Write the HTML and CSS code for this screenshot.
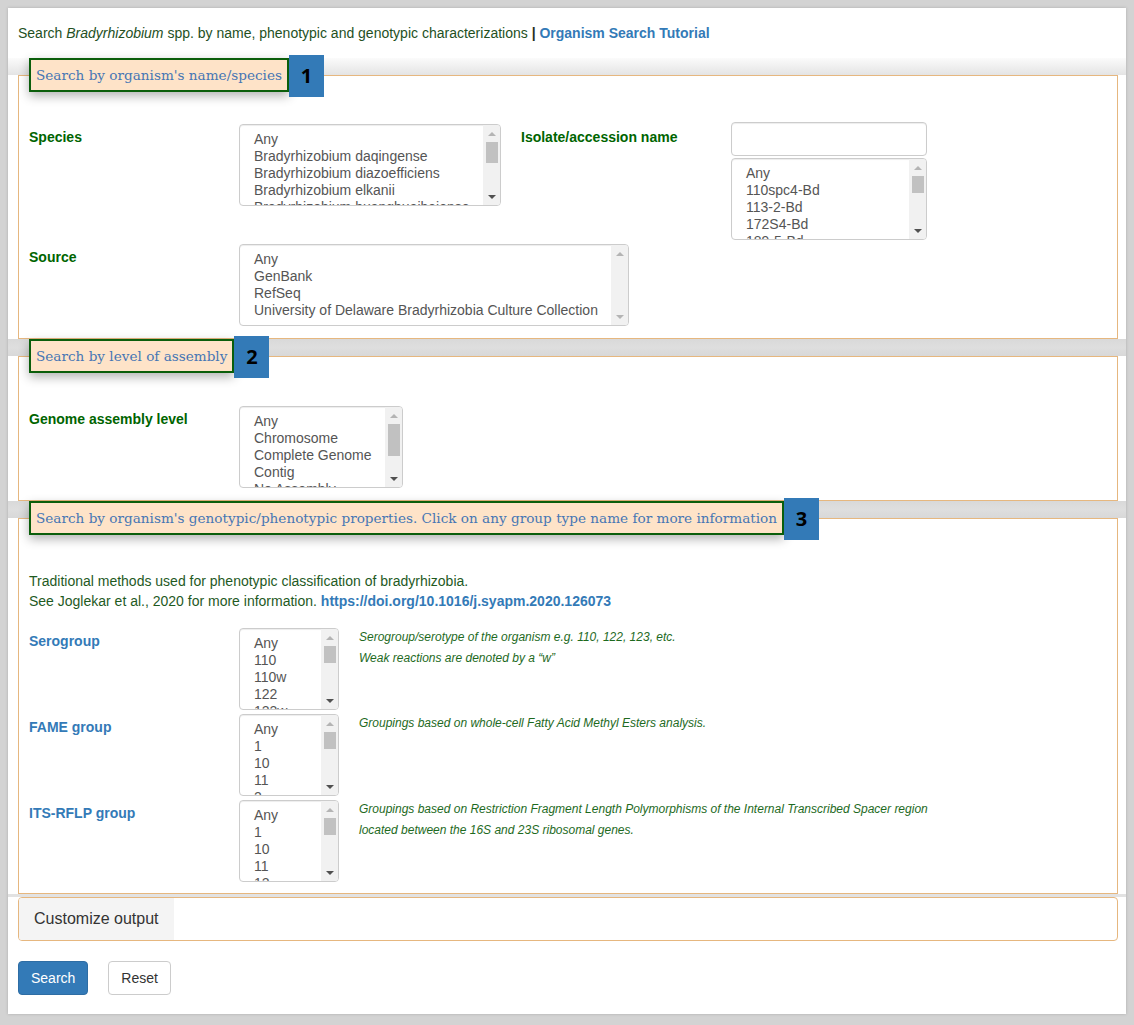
FILE: index.html
```html
<!DOCTYPE html>
<html>
<head>
<meta charset="utf-8">
<link rel="stylesheet" href="styles.css">
</head>
<body>
<div class="page">
  <p class="intro">Search <i>Bradyrhizobium</i> spp. by name, phenotypic and genotypic characterizations <b class="bar">|</b> <a class="link">Organism Search Tutorial</a></p>

  <div class="sec sec-first">
    <fieldset class="fs fs1">
      <legend class="lg">Search by organism's name/species<span class="badge">1</span></legend>
      <div class="row row-first">
        <div class="lab lab-green">Species</div>
        <div class="ctl ctl-species">
          <div class="ms w-species">
            <div class="opts"><div>Any</div><div>Bradyrhizobium daqingense</div><div>Bradyrhizobium diazoefficiens</div><div>Bradyrhizobium elkanii</div><div>Bradyrhizobium huanghuaihaiense</div></div>
            <div class="sb"><span class="up"></span><span class="thumb t-md"></span><span class="fill"></span><span class="dn"></span></div>
          </div>
        </div>
        <div class="lab lab-green">Isolate/accession name</div>
        <div class="ctl ctl-isolate">
          <div class="inp"></div>
          <div class="ms w-isolate">
            <div class="opts"><div>Any</div><div>110spc4-Bd</div><div>113-2-Bd</div><div>172S4-Bd</div><div>189-5-Bd</div></div>
            <div class="sb"><span class="up"></span><span class="thumb t-sm"></span><span class="fill"></span><span class="dn"></span></div>
          </div>
        </div>
      </div>
      <div class="row row-second">
        <div class="lab lab-green">Source</div>
        <div class="ctl">
          <div class="ms w-source">
            <div class="opts"><div>Any</div><div>GenBank</div><div>RefSeq</div><div>University of Delaware Bradyrhizobia Culture Collection</div></div>
            <div class="sb"><span class="up"></span><span class="fill"></span><span class="dn dn-off"></span></div>
          </div>
        </div>
      </div>
    </fieldset>
  </div>

  <div class="sec">
    <fieldset class="fs fs2">
      <legend class="lg">Search by level of assembly<span class="badge">2</span></legend>
      <div class="row">
        <div class="lab lab-green">Genome assembly level</div>
        <div class="ctl">
          <div class="ms w-genome">
            <div class="opts"><div>Any</div><div>Chromosome</div><div>Complete Genome</div><div>Contig</div><div>No Assembly</div></div>
            <div class="sb"><span class="up"></span><span class="thumb t-lg"></span><span class="fill"></span><span class="dn"></span></div>
          </div>
        </div>
      </div>
    </fieldset>
  </div>

  <div class="sec">
    <fieldset class="fs fs3">
      <legend class="lg">Search by organism's genotypic/phenotypic properties. Click on any group type name for more information<span class="badge">3</span></legend>
      <p class="trad">Traditional methods used for phenotypic classification of bradyrhizobia.<br>See Joglekar et al., 2020 for more information. <a class="link">https://doi.org/10.1016/j.syapm.2020.126073</a></p>
      <div class="grp">
        <div class="lab lab-blue">Serogroup</div>
        <div class="ms w-group">
          <div class="opts"><div>Any</div><div>110</div><div>110w</div><div>122</div><div>122w</div></div>
          <div class="sb"><span class="up"></span><span class="thumb t-sm"></span><span class="fill"></span><span class="dn"></span></div>
        </div>
        <div class="desc">Serogroup/serotype of the organism e.g. 110, 122, 123, etc.<br>Weak reactions are denoted by a “w”</div>
      </div>
      <div class="grp">
        <div class="lab lab-blue">FAME group</div>
        <div class="ms w-group">
          <div class="opts"><div>Any</div><div>1</div><div>10</div><div>11</div><div>2</div></div>
          <div class="sb"><span class="up"></span><span class="thumb t-sm"></span><span class="fill"></span><span class="dn"></span></div>
        </div>
        <div class="desc">Groupings based on whole-cell Fatty Acid Methyl Esters analysis.</div>
      </div>
      <div class="grp">
        <div class="lab lab-blue">ITS-RFLP group</div>
        <div class="ms w-group">
          <div class="opts"><div>Any</div><div>1</div><div>10</div><div>11</div><div>12</div></div>
          <div class="sb"><span class="up"></span><span class="thumb t-sm"></span><span class="fill"></span><span class="dn"></span></div>
        </div>
        <div class="desc">Groupings based on Restriction Fragment Length Polymorphisms of the Internal Transcribed Spacer region<br>located between the 16S and 23S ribosomal genes.</div>
      </div>
    </fieldset>
  </div>

  <div class="gap"></div>
  <div class="panel"><div class="panel-title">Customize output</div></div>

  <div class="btns">
    <button class="btn btn-primary">Search</button>
    <button class="btn btn-default">Reset</button>
  </div>
</div>
</body>
</html>
```
FILE: styles.css
```css
* { box-sizing: border-box; }
html, body { margin: 0; }
body {
  background: #d3d3d3;
  font-family: "Liberation Sans", Arial, sans-serif;
  font-size: 14px;
  line-height: 20px;
  color: #333;
  height: 1025px;
  padding: 8px 0 0 8px;
  overflow: hidden;
}
.page {
  width: 1118px;
  background: #fff;
  padding: 15px 8px 19px 10px;
  box-shadow: 0 0 3px rgba(0,0,0,.18);
}
.intro { margin: 0 0 15px; color: #24501e; }
.bar { color: #1f2f1f; }
.link { color: #337ab7; font-weight: bold; text-decoration: none; }

/* full-width section; the band above each fieldset's top border is the grey shadow strip */
.sec {
  margin: 0 -8px 0 -10px;
  padding: 0 8px 0 10px;
  background:
    linear-gradient(to bottom, #d9d9d9, #dedede 50%, #d8d8d8) 0 0 / 100% 17px no-repeat,
    #fff;
}
.sec-first {
  background:
    linear-gradient(to bottom, #fbfbfb, #e4e4e4) 0 0 / 100% 17px no-repeat,
    #fff;
}
.fs {
  margin: 0;
  padding: 0 10px 12px;
  border: 1px solid #e6b77f;
  background: transparent;
  min-width: 0;
}
.lg {
  position: relative;
  padding: 0 5px;
  height: 34px;
  line-height: 30px;
  border: 2px solid #0b5e0b;
  background: #fee3c8;
  color: #4676b4;
  font-family: "DejaVu Serif", "Liberation Serif", serif;
  font-size: 13.6px;
  box-shadow: 0 4px 10px rgba(0,0,0,.3);
}
.badge {
  position: absolute;
  left: calc(100% + 2px);
  top: -5px;
  width: 35px;
  height: 42px;
  background: #337ab7;
  color: #000;
  font-family: "Open Sans", "Liberation Sans", sans-serif;
  font-weight: bold;
  font-size: 20px;
  line-height: 42px;
  text-align: center;
}

.row { display: flex; align-items: flex-start; }
.fs1 .row-first { margin-top: 30px; }
.row-second { margin-top: 4px; }
.fs2 .row { margin-top: 33px; }
.lab { width: 210px; flex: none; padding-top: 3px; font-weight: bold; }
.row-first .lab { padding-top: 5px; }
.lab-green { color: #006400; }
.lab-blue { color: #337ab7; }
.ctl-species { width: 282px; flex: none; padding-top: 2px; }
.ctl-isolate { width: 196px; flex: none; }

.inp {
  height: 34px;
  border: 1px solid #ccc;
  border-radius: 4px;
  box-shadow: inset 0 1px 1px rgba(0,0,0,.075);
  margin-bottom: 2px;
  background: #fff;
}
.ms {
  display: flex;
  height: 82px;
  border: 1px solid #ccc;
  border-radius: 4px;
  background: #fff;
  overflow: hidden;
  box-shadow: inset 0 1px 1px rgba(0,0,0,.075);
}
.w-species { width: 262px; }
.w-isolate { width: 196px; }
.w-source { width: 390px; }
.w-genome { width: 164px; }
.w-group { width: 100px; flex: none; }
.opts {
  flex: 1;
  min-width: 0;
  padding: 6px 0 0 14px;
  line-height: 17px;
  color: #555;
  overflow: hidden;
  white-space: nowrap;
}
.sb {
  flex: none;
  width: 17px;
  background: #f1f1f1;
  display: flex;
  flex-direction: column;
  align-items: center;
}
.up, .dn {
  flex: none;
  width: 17px;
  height: 17px;
  display: flex;
  align-items: center;
  justify-content: center;
}
.up::after {
  content: "";
  border-left: 4px solid transparent;
  border-right: 4px solid transparent;
  border-bottom: 4px solid #b4b4b4;
}
.dn::after {
  content: "";
  border-left: 4px solid transparent;
  border-right: 4px solid transparent;
  border-top: 4px solid #505050;
}
.dn-off::after { border-top-color: #b4b4b4; }
.fill { flex: 1; }
.thumb { flex: none; width: 12px; background: #c1c1c1; }
.t-sm { height: 17px; }
.t-md { height: 21px; }
.t-lg { height: 32px; }

.trad { margin: 36px 0 17px; color: #1f5a1f; }
.grp { display: flex; align-items: flex-start; }
.grp + .grp { margin-top: 4px; }
.desc {
  margin-left: 20px;
  font-size: 12px;
  line-height: 21px;
  font-style: italic;
  color: #1e6a1e;
  margin-top: -1px;
}
.fs3 { padding-bottom: 11px; }

.gap {
  height: 3px;
  margin: 0 -8px 0 -10px;
  background: #e2e2e2;
}
.panel {
  height: 44px;
  border: 1px solid #e6b77f;
  border-radius: 4px;
  background: #fff;
  display: flex;
}
.panel-title {
  background: #f4f4f4;
  padding: 0 15px;
  font-size: 16px;
  line-height: 42px;
  color: #333;
  border-radius: 3px 0 0 3px;
}
.btns { margin-top: 20px; display: flex; gap: 20px; }
.btn {
  height: 34px;
  padding: 6px 12px;
  font-family: "Liberation Sans", Arial, sans-serif;
  font-size: 14px;
  line-height: 20px;
  border-radius: 4px;
  border: 1px solid #ccc;
  cursor: pointer;
}
.btn-primary { background: #337ab7; border-color: #2e6da4; color: #fff; }
.btn-default { background: #fff; color: #333; }
```
